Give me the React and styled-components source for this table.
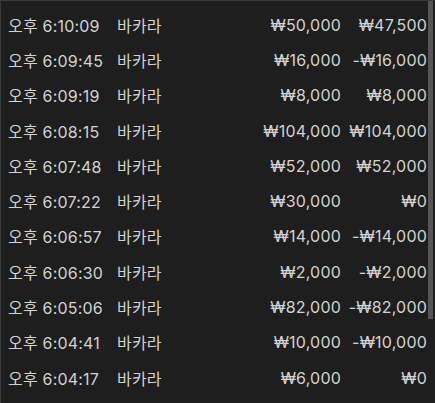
import React from "react";
import styled, { createGlobalStyle } from "styled-components";

const Global = createGlobalStyle`
  html, body { margin: 0; padding: 0; background: #1e1e1e; }
  body { font-family: Inter, "Noto Sans CJK KR", sans-serif; }
`;

const Frame = styled.div`
  position: relative;
  box-sizing: border-box;
  width: 435px;
  height: 403px;
  background: #1e1e1e;
  border-top: 1px solid #3a3a3a;
  border-left: 1px solid #3a3a3a;
  overflow: hidden;
`;

const List = styled.div`
  padding-top: 6px;
  padding-right: 8px;
`;

const Thumb = styled.div`
  position: absolute;
  top: 0;
  right: 2px;
  width: 5px;
  height: 318px;
  background: #555555;
`;

const Row = styled.div`
  display: grid;
  grid-template-columns: 109px 1fr 122px 86px;
  align-items: center;
  height: 35.3px;
  padding-left: 7px;
  font-size: 16px;
  letter-spacing: 0.2px;
  color: #d2d2d2;
  white-space: nowrap;
`;

const Cell = styled.span`
  text-align: ${(p) => (p.$right ? "right" : "left")};
`;

const rows = [
  ["오후 6:10:09", "₩50,000", "₩47,500"],
  ["오후 6:09:45", "₩16,000", "-₩16,000"],
  ["오후 6:09:19", "₩8,000", "₩8,000"],
  ["오후 6:08:15", "₩104,000", "₩104,000"],
  ["오후 6:07:48", "₩52,000", "₩52,000"],
  ["오후 6:07:22", "₩30,000", "₩0"],
  ["오후 6:06:57", "₩14,000", "-₩14,000"],
  ["오후 6:06:30", "₩2,000", "-₩2,000"],
  ["오후 6:05:06", "₩82,000", "-₩82,000"],
  ["오후 6:04:41", "₩10,000", "-₩10,000"],
  ["오후 6:04:17", "₩6,000", "₩0"],
];

export default function App() {
  return (
    <>
      <Global />
      <Frame>
        <List>
          {rows.map(([t, a, r], i) => (
            <Row key={i}>
              <Cell>{t}</Cell>
              <Cell>바카라</Cell>
              <Cell $right>{a}</Cell>
              <Cell $right>{r}</Cell>
            </Row>
          ))}
        </List>
        <Thumb />
      </Frame>
    </>
  );
}
